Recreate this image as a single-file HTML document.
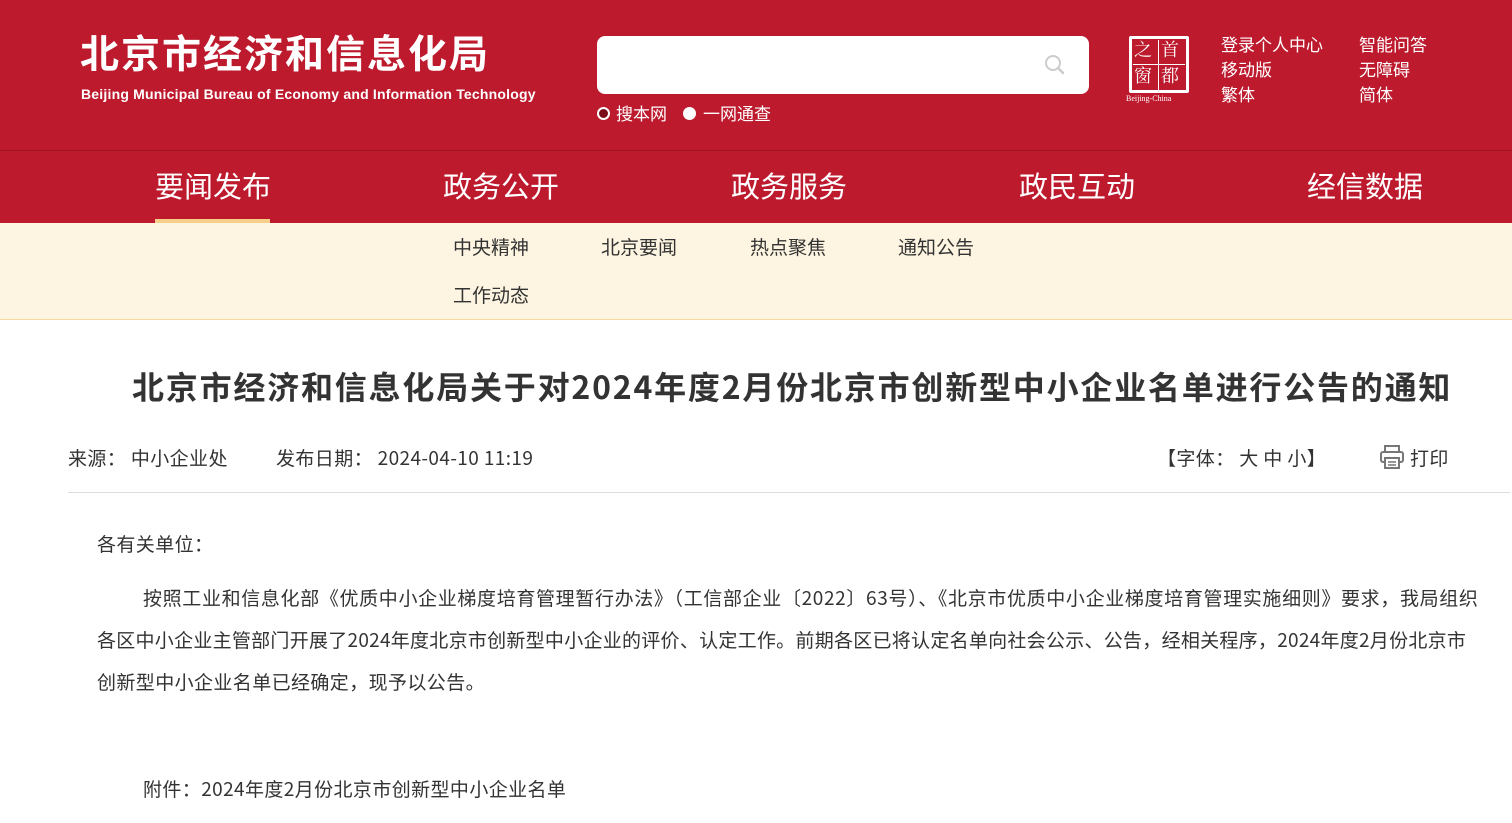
<!DOCTYPE html>
<html><head><meta charset="utf-8"><style>
*{margin:0;padding:0;box-sizing:border-box}
body{width:1512px;height:823px;overflow:hidden;background:#fff;font-family:"Noto Sans CJK SC","Liberation Sans",sans-serif;position:relative;color:#333}
.a{position:absolute;white-space:nowrap;line-height:1.2}
#hd{position:absolute;left:0;top:0;width:1512px;height:151px;background:#bd1a2e;border-bottom:1px solid #9e1224}
#nav{position:absolute;left:0;top:151px;width:1512px;height:72px;background:#bd1a2e}
#nav .a{color:#fff;font-size:29px;top:17px}
#sub{position:absolute;left:0;top:223px;width:1512px;height:97px;background:#fdf5e1;border-bottom:1px solid #f6d7a0}
#sub .a{font-size:19px;color:#333}
.r{color:#fff;font-size:17px}
.t{font-size:19px;letter-spacing:0.4px}
</style></head><body>
<div id="hd">
<div class="a" style="left:80px;top:33px;color:#fff;font-size:39px;font-weight:bold;letter-spacing:2px;font-family:'Liberation Sans','Noto Sans CJK SC',sans-serif">北京市经济和信息化局</div>
<div class="a" style="left:81px;top:86px;color:#fff;font-size:14px;font-weight:bold;letter-spacing:0.2px;font-family:'Liberation Sans',sans-serif">Beijing Municipal Bureau of Economy and Information Technology</div>
<div class="a" style="left:597px;top:36px;width:492px;height:58px;background:#fff;border-radius:8px"></div>
<svg class="a" style="left:1044px;top:54px" width="22" height="22" viewBox="0 0 22 22"><circle cx="9" cy="9" r="7" fill="none" stroke="#ccc" stroke-width="2"/><path d="M14 14l5 5" stroke="#ccc" stroke-width="2.5" stroke-linecap="round"/></svg>
<div class="a" style="left:597px;top:107px;width:13px;height:13px;border-radius:50%;background:#7a0d18;border:2px solid #fff"></div>
<div class="a r" style="left:616px;top:103px">搜本网</div>
<div class="a" style="left:683px;top:107px;width:13px;height:13px;border-radius:50%;background:#fff"></div>
<div class="a r" style="left:703px;top:103px">一网通查</div>
<div class="a" style="left:1129px;top:36px;width:60px;height:57px;border:3px solid #fff;border-radius:2px"></div>
<div class="a" style="left:1158px;top:40px;width:1px;height:50px;background:#fff"></div>
<div class="a" style="left:1133px;top:64px;width:52px;height:1px;background:#fff"></div>
<div class="a" style="left:1134px;top:39px;color:#fff;font-size:18px;font-family:'Noto Serif CJK SC',serif">之</div>
<div class="a" style="left:1161px;top:39px;color:#fff;font-size:18px;font-family:'Noto Serif CJK SC',serif">首</div>
<div class="a" style="left:1134px;top:65px;color:#fff;font-size:18px;font-family:'Noto Serif CJK SC',serif">窗</div>
<div class="a" style="left:1161px;top:65px;color:#fff;font-size:18px;font-family:'Noto Serif CJK SC',serif">都</div>
<div class="a" style="left:1126px;top:94px;color:#fff;font-size:8px;font-family:'Liberation Serif',serif">Beijing-China</div>
<div class="a r" style="left:1221px;top:34px">登录个人中心</div>
<div class="a r" style="left:1221px;top:59px">移动版</div>
<div class="a r" style="left:1221px;top:84px">繁体</div>
<div class="a r" style="left:1359px;top:34px">智能问答</div>
<div class="a r" style="left:1359px;top:59px">无障碍</div>
<div class="a r" style="left:1359px;top:84px">简体</div>
</div>
<div id="nav">
<div class="a" style="left:155px">要闻发布</div>
<div class="a" style="left:155px;top:68px;width:115px;height:4px;background:#f6d08b"></div>
<div class="a" style="left:443px">政务公开</div>
<div class="a" style="left:731px">政务服务</div>
<div class="a" style="left:1019px">政民互动</div>
<div class="a" style="left:1307px">经信数据</div>
</div>
<div id="sub">
<div class="a" style="left:453px;top:13px">中央精神</div>
<div class="a" style="left:601px;top:13px">北京要闻</div>
<div class="a" style="left:750px;top:13px">热点聚焦</div>
<div class="a" style="left:898px;top:13px">通知公告</div>
<div class="a" style="left:453px;top:61px">工作动态</div>
</div>
<div class="a" style="left:132px;top:367px;font-size:32px;font-weight:bold;color:#333;letter-spacing:1.8px">北京市经济和信息化局关于对2024年度2月份北京市创新型中小企业名单进行公告的通知</div>
<div class="a t" style="left:68px;top:447px">来源：&nbsp;中小企业处</div>
<div class="a t" style="left:276px;top:447px;">发布日期：&nbsp;2024-04-10 11:19</div>
<div class="a t" style="left:1157px;top:447px">【字体：&nbsp;大 中 小】</div>
<svg class="a" style="left:1379px;top:444px" width="26" height="26" viewBox="0 0 26 26"><rect x="6" y="2" width="14" height="6" fill="none" stroke="#777" stroke-width="2"/><rect x="2" y="8" width="22" height="10" rx="2" fill="none" stroke="#777" stroke-width="2"/><rect x="6" y="14" width="14" height="10" fill="#fff" stroke="#777" stroke-width="2"/><path d="M9 18h8M9 21h8" stroke="#777" stroke-width="1.5"/></svg>
<div class="a t" style="left:1410px;top:447px">打印</div>
<div class="a" style="left:68px;top:492px;width:1442px;height:1px;background:#ddd"></div>
<div class="a t" style="left:97px;top:533px">各有关单位：</div>
<div class="a t" style="left:143px;top:587px;letter-spacing:0.65px">按照工业和信息化部《优质中小企业梯度培育管理暂行办法》（工信部企业〔2022〕63号）、《北京市优质中小企业梯度培育管理实施细则》要求，我局组织</div>
<div class="a t" style="left:97px;top:629px;letter-spacing:0.27px">各区中小企业主管部门开展了2024年度北京市创新型中小企业的评价、认定工作。前期各区已将认定名单向社会公示、公告，经相关程序，2024年度2月份北京市</div>
<div class="a t" style="left:97px;top:671px">创新型中小企业名单已经确定，现予以公告。</div>
<div class="a t" style="left:143px;top:778px">附件：2024年度2月份北京市创新型中小企业名单</div>
</body></html>
